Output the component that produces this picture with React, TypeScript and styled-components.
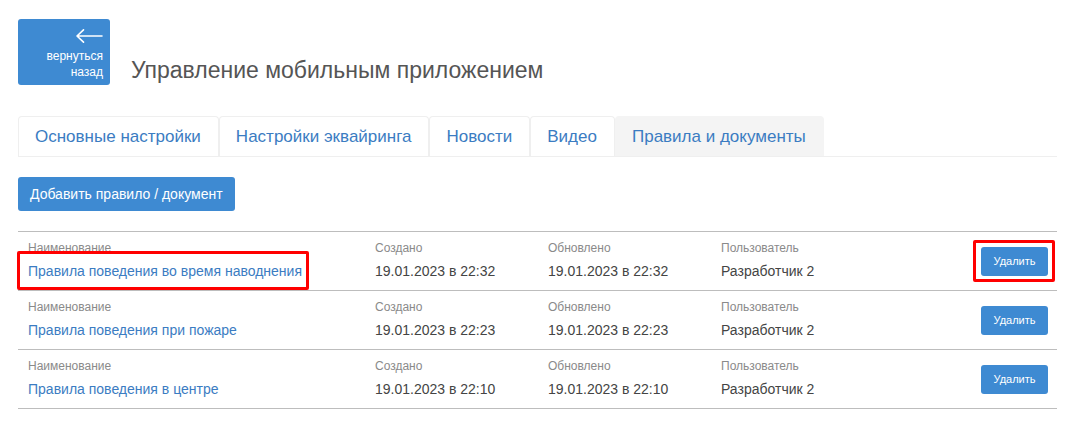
import styled, { createGlobalStyle } from 'styled-components';

const GlobalStyle = createGlobalStyle`
  body {
    margin: 0;
    background: #fff;
    font-family: "Liberation Sans", Arial, sans-serif;
  }
`;

const tabs = [
  'Основные настройки',
  'Настройки эквайринга',
  'Новости',
  'Видео',
  'Правила и документы',
];

const documents = [
  {
    name: 'Правила поведения во время наводнения',
    created: '19.01.2023 в 22:32',
    updated: '19.01.2023 в 22:32',
    user: 'Разработчик 2',
    marked: true,
  },
  {
    name: 'Правила поведения при пожаре',
    created: '19.01.2023 в 22:23',
    updated: '19.01.2023 в 22:23',
    user: 'Разработчик 2',
    marked: false,
  },
  {
    name: 'Правила поведения в центре',
    created: '19.01.2023 в 22:10',
    updated: '19.01.2023 в 22:10',
    user: 'Разработчик 2',
    marked: false,
  },
];

const App = () => {
  return (
    <Page>
      <GlobalStyle />
      <Header>
        <BackButton>
          <svg width="28" height="14" viewBox="0 0 28 14" fill="none">
            <path
              d="M27 7H2M8.5 0.8L2 7l6.5 6.2"
              stroke="#fff"
              strokeWidth={1.6}
              strokeLinecap="round"
              strokeLinejoin="round"
            />
          </svg>
          <BackText>вернуться</BackText>
          <BackText>назад</BackText>
        </BackButton>
        <Title>Управление мобильным приложением</Title>
      </Header>

      <Tabs>
        {tabs.map((tab, i) => (
          <Tab key={tab} $active={i === tabs.length - 1}>
            {tab}
          </Tab>
        ))}
      </Tabs>

      <AddButton>Добавить правило / документ</AddButton>

      <Table>
        {documents.map(doc => (
          <Row key={doc.name}>
            <NameCell>
              <Label>Наименование</Label>
              <LinkValue>
                <Marked $on={doc.marked} $box="-10px -7px -9px -11px">
                  {doc.name}
                </Marked>
              </LinkValue>
            </NameCell>
            <Cell>
              <Label>Создано</Label>
              <Value>{doc.created}</Value>
            </Cell>
            <Cell>
              <Label>Обновлено</Label>
              <Value>{doc.updated}</Value>
            </Cell>
            <UserCell>
              <Label>Пользователь</Label>
              <Value>{doc.user}</Value>
            </UserCell>
            <Marked $on={doc.marked} $box="-7px -7px -6px -8px">
              <DeleteButton>Удалить</DeleteButton>
            </Marked>
          </Row>
        ))}
      </Table>
    </Page>
  );
};

export default App;

const Page = styled.div`
  padding: 19px 20px 20px 18px;
`;

const Header = styled.div`
  display: flex;
  align-items: flex-end;
  gap: 21px;
`;

const BackButton = styled.button`
  width: 92px;
  height: 66px;
  padding: 10px 7px 4px 0;
  border: none;
  border-radius: 3px;
  background: #3e8ad2;
  color: #fff;
  display: flex;
  flex-direction: column;
  align-items: flex-end;
  cursor: pointer;
  font-family: inherit;

  svg {
    margin-bottom: 5px;
  }
`;

const BackText = styled.span`
  font-size: 12px;
  line-height: 16px;
`;

const Title = styled.h1`
  margin: 0 0 1px;
  font-size: 23px;
  line-height: 28px;
  font-weight: normal;
  color: #555;
`;

const Tabs = styled.div`
  display: flex;
  margin-top: 31px;
  border-bottom: 1px solid #efefef;
`;

const Tab = styled.div<{ $active: boolean }>`
  height: 39px;
  padding: 0 17px 0 16px;
  display: flex;
  align-items: center;
  font-size: 17px;
  color: #3b7cc2;
  background: ${p => (p.$active ? '#f4f4f4' : '#fff')};
  border: 1px solid ${p => (p.$active ? '#f4f4f4' : '#efefef')};
  border-bottom: none;
  border-radius: 4px 4px 0 0;
  cursor: pointer;
`;

const AddButton = styled.button`
  margin-top: 20px;
  height: 34px;
  padding: 0 12px;
  border: none;
  border-radius: 3px;
  background: #3e8ad2;
  color: #fff;
  font-family: inherit;
  font-size: 14px;
  cursor: pointer;
`;

const Table = styled.div`
  margin-top: 20px;
  border-bottom: 1px solid #bdbdbd;
`;

const Row = styled.div`
  display: flex;
  align-items: center;
  box-sizing: border-box;
  height: 59px;
  padding: 0 9px 0 10px;
  border-top: 1px solid #bdbdbd;
`;

const Cell = styled.div`
  width: 173px;
  display: flex;
  flex-direction: column;
`;

const NameCell = styled(Cell)`
  width: 347px;
`;

const UserCell = styled(Cell)`
  flex: 1;
`;

const Label = styled.span`
  font-size: 12px;
  line-height: 15px;
  color: #8a8a8a;
  margin-bottom: 5px;
`;

const Value = styled.span`
  font-size: 14px;
  line-height: 20px;
  color: #444;
`;

const LinkValue = styled(Value)`
  color: #3b7cc2;
  cursor: pointer;
`;

const Marked = styled.span<{ $on: boolean; $box: string }>`
  position: relative;
  display: inline-flex;

  &::after {
    content: '';
    display: ${p => (p.$on ? 'block' : 'none')};
    position: absolute;
    inset: ${p => p.$box};
    border: 3px solid #f00;
    border-radius: 2px;
    pointer-events: none;
  }
`;

const DeleteButton = styled.button`
  width: 67px;
  height: 29px;
  border: none;
  border-radius: 3px;
  background: #3e8ad2;
  color: #fff;
  font-family: inherit;
  font-size: 11px;
  cursor: pointer;
`;
